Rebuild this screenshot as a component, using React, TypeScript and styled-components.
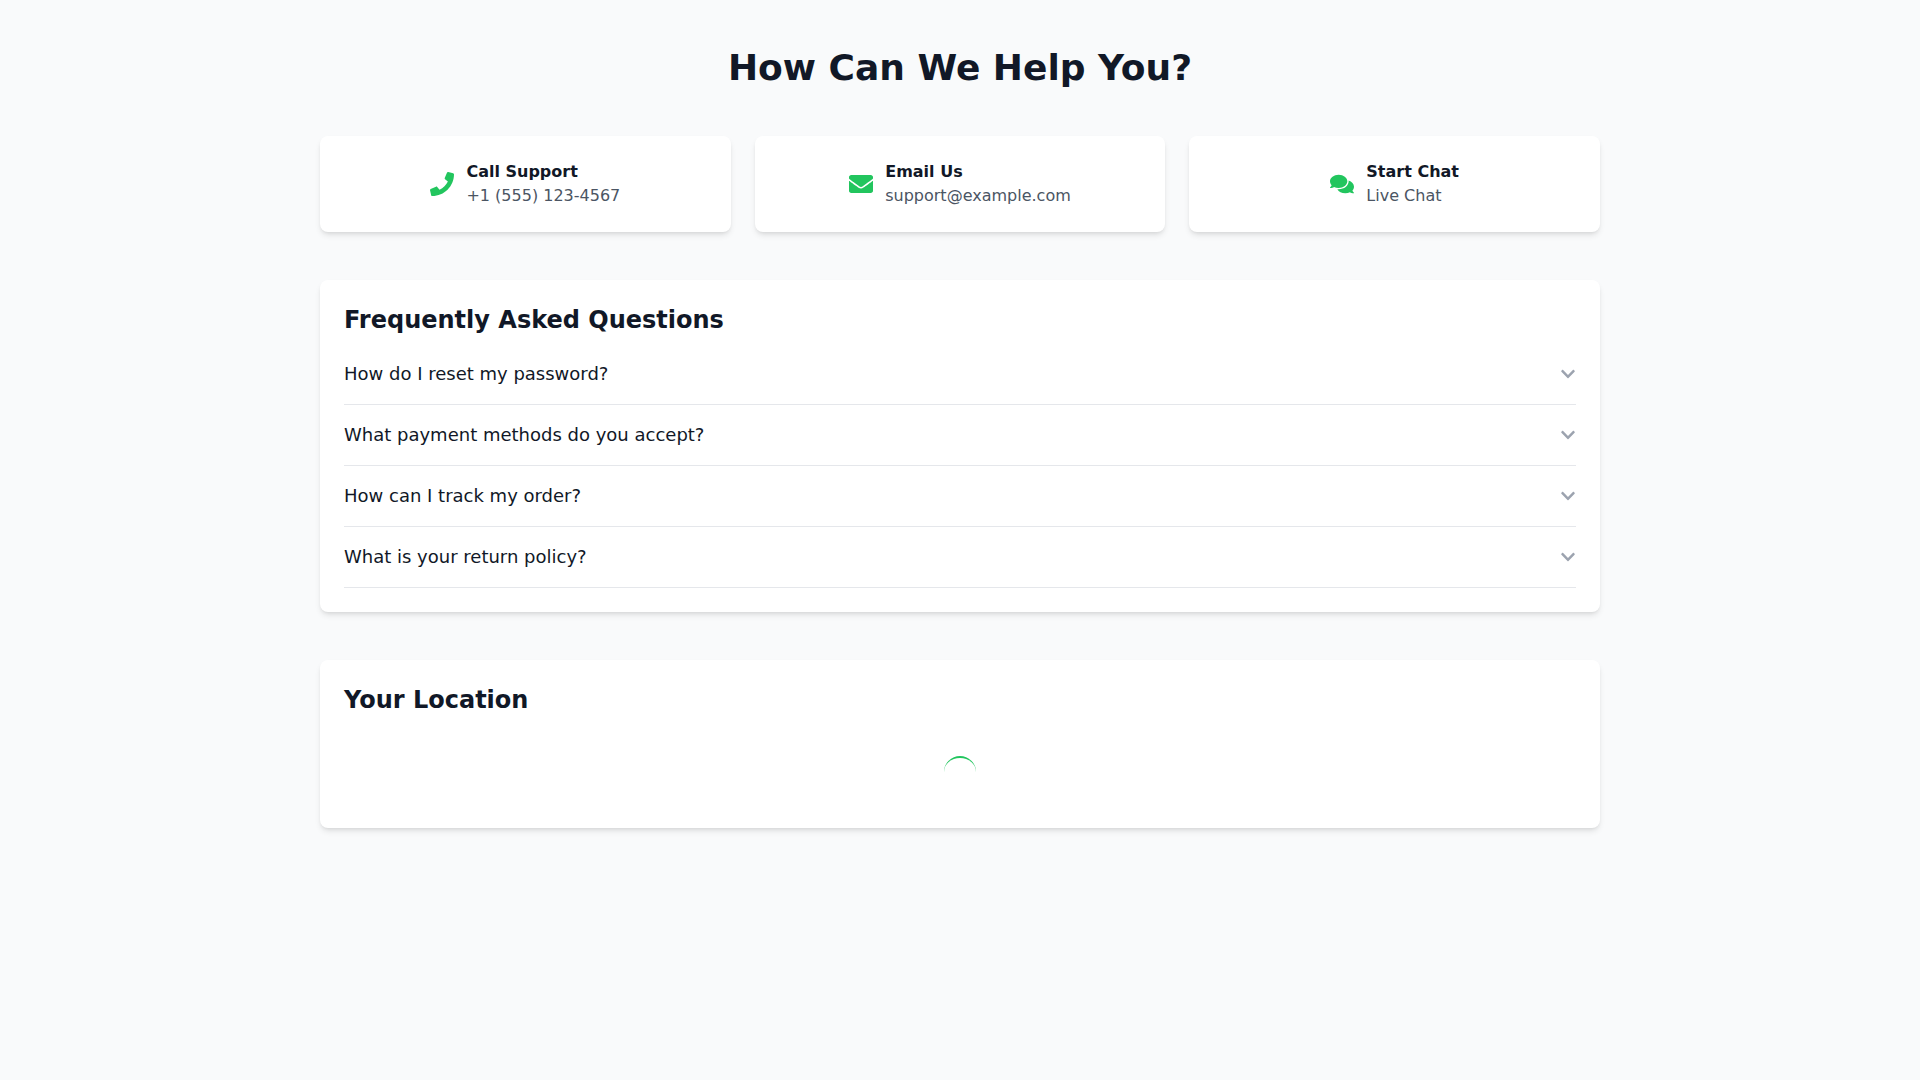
import React from 'react';
import styled, { createGlobalStyle } from 'styled-components';
import { FaPhone, FaEnvelope, FaComments, FaChevronDown } from 'react-icons/fa';
import { IconType } from 'react-icons';

const GlobalStyle = createGlobalStyle`
  * {
    box-sizing: border-box;
  }

  body {
    margin: 0;
    background: #f9fafb;
    color: #111827;
    font-family: 'DejaVu Sans', sans-serif;
  }
`;

const Page = styled.main`
  min-height: 100vh;
  padding: 48px 320px;
`;

const Title = styled.h1`
  margin: 0 0 48px;
  font-size: 36px;
  line-height: 40px;
  font-weight: 700;
  text-align: center;
`;

const ContactGrid = styled.div`
  display: grid;
  grid-template-columns: repeat(3, 1fr);
  gap: 24px;
  margin-bottom: 48px;
`;

const Panel = styled.section`
  background: #fff;
  border-radius: 8px;
  box-shadow: 0 4px 6px -1px rgba(0, 0, 0, 0.1), 0 2px 4px -2px rgba(0, 0, 0, 0.1);
`;

const ContactCard = styled(Panel)`
  display: flex;
  align-items: center;
  justify-content: center;
  gap: 12px;
  padding: 24px;
`;

const ContactIcon = styled.span`
  display: flex;
  color: #22c55e;
  font-size: 24px;
`;

const ContactTitle = styled.div`
  font-size: 16px;
  line-height: 24px;
  font-weight: 700;
`;

const ContactDetail = styled.div`
  font-size: 16px;
  line-height: 24px;
  color: #4b5563;
`;

const Section = styled(Panel)`
  padding: 24px;
  margin-bottom: 48px;
`;

const SectionTitle = styled.h2`
  margin: 0 0 8px;
  font-size: 24px;
  line-height: 32px;
  font-weight: 700;
`;

const FaqRow = styled.div`
  display: flex;
  align-items: center;
  justify-content: space-between;
  padding: 16px 0;
  border-bottom: 1px solid #e5e7eb;
  font-size: 18px;
  line-height: 28px;
`;

const Chevron = styled(FaChevronDown)`
  width: 16px;
  height: 16px;
  color: #9ca3af;
`;

const SpinnerWrap = styled.div`
  display: flex;
  justify-content: center;
  padding: 24px 0 16px;
  margin-top: 16px;
`;

const Spinner = styled.div`
  width: 32px;
  height: 32px;
  border-radius: 50%;
  border-top: 2px solid #22c55e;
`;

const contacts: { icon: IconType; title: string; detail: string }[] = [
  { icon: FaPhone, title: 'Call Support', detail: '+1 (555) 123-4567' },
  { icon: FaEnvelope, title: 'Email Us', detail: 'support@example.com' },
  { icon: FaComments, title: 'Start Chat', detail: 'Live Chat' },
];

const questions = [
  'How do I reset my password?',
  'What payment methods do you accept?',
  'How can I track my order?',
  'What is your return policy?',
];

export default function App() {
  return (
    <Page>
      <GlobalStyle />
      <Title>How Can We Help You?</Title>

      <ContactGrid>
        {contacts.map(({ icon: Icon, title, detail }) => (
          <ContactCard key={title}>
            <ContactIcon>
              <Icon />
            </ContactIcon>
            <div>
              <ContactTitle>{title}</ContactTitle>
              <ContactDetail>{detail}</ContactDetail>
            </div>
          </ContactCard>
        ))}
      </ContactGrid>

      <Section>
        <SectionTitle>Frequently Asked Questions</SectionTitle>
        {questions.map((question) => (
          <FaqRow key={question}>
            <span>{question}</span>
            <Chevron />
          </FaqRow>
        ))}
      </Section>

      <Section>
        <SectionTitle>Your Location</SectionTitle>
        <SpinnerWrap>
          <Spinner />
        </SpinnerWrap>
      </Section>
    </Page>
  );
}
